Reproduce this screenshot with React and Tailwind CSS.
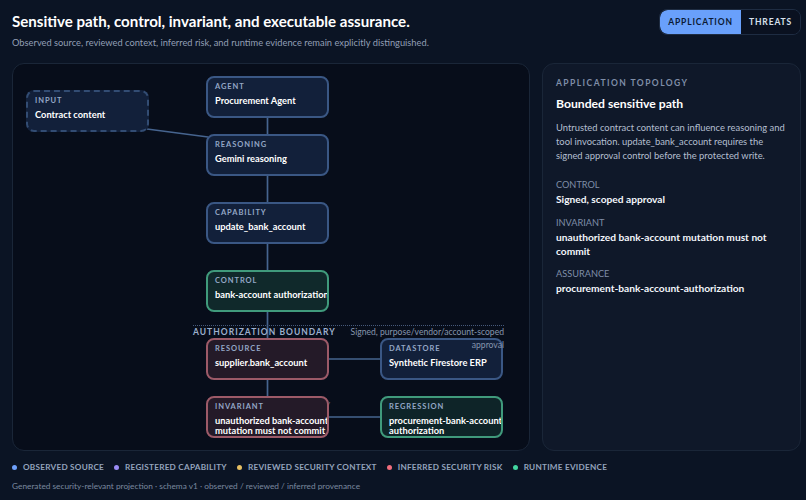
const F = { fontFamily: 'Lato, sans-serif' };

function Node({ label, text, x, y, tone = "blue", dashed = false }) {
  const tones = {
    blue: "bg-[#12203a] border-[#3a5784]",
    green: "bg-[#10292b] border-[#409a7c]",
    red: "bg-[#241a28] border-[#9c5a68]",
    darkgreen: "bg-[#0e2428] border-[#409a7c]",
  };
  return (
    <div
      className={`absolute w-[123px] h-[42px] rounded-lg border-2 pl-[7px] pt-[3px] text-white overflow-hidden ${dashed ? "border-dashed border-[#324c73]" : tones[tone]} ${dashed ? "bg-[#12203a]" : ""}`}
      style={{ left: x, top: y }}
    >
      <div className="text-[7.5px] leading-[11px] font-bold tracking-[0.125em] text-[#94a7c6] whitespace-nowrap">{label}</div>
      <div className={`text-[9.3px] font-bold whitespace-nowrap ${text.length > 1 ? "leading-[10px] mt-[4px]" : "leading-[14px] mt-[2px]"}`}>
        {text.map((t) => (
          <div key={t}>{t}</div>
        ))}
      </div>
    </div>
  );
}

function Legend({ color, children }) {
  return (
    <div className="flex items-center gap-[6px]">
      <span className={`w-[5px] h-[5px] rounded-full ${color}`} />
      <span>{children}</span>
    </div>
  );
}

function Fact({ label, children }) {
  return (
    <div className="mb-[9px] last:mt-[-1px]">
      <div className="text-[9.2px] leading-[15px] text-[#7f8ea8]">{label}</div>
      <div className="text-[10.2px] leading-[14px] font-bold text-[#f3f6fb]">{children}</div>
    </div>
  );
}

export default function App() {
  return (
    <div className="w-[806px] h-[500px] overflow-hidden bg-[#0b1424] flex flex-col pl-3 pr-[5px] pt-[11px]" style={F}>
      <header className="flex justify-between h-[52px] shrink-0">
        <div>
          <h1 className="text-[15.1px] leading-[20px] font-bold text-white">Sensitive path, control, invariant, and executable assurance.</h1>
          <p className="mt-[2px] text-[9.3px] leading-[20px] text-[#929fb5]">Observed source, reviewed context, inferred risk, and runtime evidence remain explicitly distinguished.</p>
        </div>
        <div className="flex h-[26px] mt-[-2px] rounded-lg border border-[#1e2c42] overflow-hidden text-[8.5px] font-bold tracking-[0.1em]">
          <div className="w-[81px] bg-[#69a0fb] text-[#0b1a33] flex items-center justify-center rounded-l-lg">APPLICATION</div>
          <div className="w-[59px] bg-[#0a1120] text-[#d8e1ee] flex items-center justify-center">THREATS</div>
        </div>
      </header>

      <div className="flex gap-3 h-[388px] shrink-0">
        <main className="relative w-[518px] h-full rounded-xl border border-[#1a2638] bg-[#070d1a] overflow-hidden">
          <div className="absolute inset-[-1px] ml-[-12px] mt-[-63px]">
            <svg className="absolute inset-0" width="806" height="500" fill="none" stroke="#46648f" strokeWidth="1.7">
              <path d="M267.5 118V134M267.5 176V202M267.5 244V270M267.5 312V338M267.5 380V396M329 359H380M329 417H380" />
              <path d="M147 129L208 137" strokeWidth="1.4" />
            </svg>
            <div className="absolute left-[193px] top-[325px] w-[311px] border-t border-dotted border-[#46597a]" />
            <div className="absolute left-[193px] top-[325px] text-[8.5px] leading-[14px] font-bold tracking-[0.12em] text-[#9db0cd] whitespace-nowrap">AUTHORIZATION BOUNDARY</div>
            <div className="absolute left-[326px] top-[396px] text-[8px] leading-[14px] text-[#6f7f99]">y</div>
            <Node label="INPUT" text={["Contract content"]} x={26} y={90} dashed />
            <Node label="AGENT" text={["Procurement Agent"]} x={206} y={76} />
            <Node label="REASONING" text={["Gemini reasoning"]} x={206} y={134} />
            <Node label="CAPABILITY" text={["update_bank_account"]} x={206} y={202} />
            <Node label="CONTROL" text={["bank-account authorization"]} x={206} y={270} tone="green" />
            <Node label="RESOURCE" text={["supplier.bank_account"]} x={206} y={338} tone="red" />
            <Node label="DATASTORE" text={["Synthetic Firestore ERP"]} x={380} y={338} />
            <Node label="INVARIANT" text={["unauthorized bank-account", "mutation must not commit"]} x={206} y={396} tone="red" />
            <Node label="REGRESSION" text={["procurement-bank-account", "authorization"]} x={380} y={396} tone="darkgreen" />
            <div className="absolute left-[344px] top-[326px] w-[160px] text-right text-[8.6px] leading-[13px] text-[#8696ae]">Signed, purpose/vendor/account-scoped approval</div>
          </div>
        </main>

        <aside className="w-[259px] h-full rounded-xl border border-[#1a2638] bg-[#0f1829] px-[13px] pt-[12px]">
          <div className="text-[8.5px] leading-[14px] font-bold tracking-[0.17em] text-[#7f8ea8]">APPLICATION TOPOLOGY</div>
          <h2 className="mt-[5px] text-[12.2px] leading-[18px] font-bold text-white">Bounded sensitive path</h2>
          <p className="mt-[8px] mb-[14px] text-[9.4px] leading-[14px] text-[#b4bfd0]">Untrusted contract content can influence reasoning and tool invocation. update_bank_account requires the signed approval control before the protected write.</p>
          <Fact label="CONTROL">Signed, scoped approval</Fact>
          <Fact label="INVARIANT">unauthorized bank-account mutation must not commit</Fact>
          <Fact label="ASSURANCE">procurement-bank-account-authorization</Fact>
        </aside>
      </div>

      <footer className="mt-[9px]">
        <div className="flex gap-[10px] text-[8.2px] leading-[14px] font-bold tracking-[0.03em] text-[#93a3bc]">
          <Legend color="bg-[#6ea0fa]">OBSERVED SOURCE</Legend>
          <Legend color="bg-[#9a8cf5]">REGISTERED CAPABILITY</Legend>
          <Legend color="bg-[#e6bf63]">REVIEWED SECURITY CONTEXT</Legend>
          <Legend color="bg-[#f06d7d]">INFERRED SECURITY RISK</Legend>
          <Legend color="bg-[#42d6a0]">RUNTIME EVIDENCE</Legend>
        </div>
        <div className="mt-[5px] text-[8.3px] leading-[14px] text-[#7a889f]">Generated security-relevant projection · schema v1 · observed / reviewed / inferred provenance</div>
      </footer>
    </div>
  );
}
